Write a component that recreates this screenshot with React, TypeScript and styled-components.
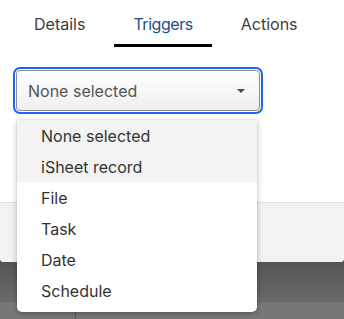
import React from "react";
import styled, { createGlobalStyle } from "styled-components";

const GlobalStyle = createGlobalStyle`
  html, body {
    margin: 0;
    padding: 0;
    background: #5a5a5a;
  }
  body {
    font-family: Inter, Roboto, "Open Sans", sans-serif;
  }
`;

const Backdrop = styled.div`
  width: 344px;
  height: 319px;
  overflow: hidden;
  display: flex;
  flex-direction: column;
  background: linear-gradient(#464646 0px, #555 262px, #6a6a6a 302px, #787878 303px);
  position: relative;
`;

const Panel = styled.div`
  background: #fff;
  height: 262px;
  display: flex;
  flex-direction: column;
  border-radius: 0 0 4px 4px;
  flex-shrink: 0;
`;

const TabBar = styled.div`
  display: flex;
  gap: 10px;
  padding-left: 15px;
  height: 48px;
`;

const Tab = styled.div<{ $active?: boolean }>`
  padding: 3px 19px 0;
  display: flex;
  align-items: center;
  font-size: 16px;
  letter-spacing: ${(p) => (p.$active ? "-0.45px" : "0")};
  color: ${(p) => (p.$active ? "#1b4f8c" : "#3d3d3d")};
  border-bottom: 3px solid ${(p) => (p.$active ? "#000" : "transparent")};
  box-sizing: border-box;
  height: 47px;
`;

const Body = styled.div`
  flex: 1;
  padding: 22px 0 0 16px;
  position: relative;
`;

const SelectBox = styled.div`
  width: 244px;
  height: 41px;
  box-sizing: border-box;
  border: 1px solid #8c8c8c;
  border-radius: 4px;
  background: linear-gradient(#ffffff, #efefef);
  outline: 2px solid #1a66f2;
  outline-offset: 1px;
  display: flex;
  align-items: center;
  justify-content: space-between;
  padding: 0 14px 0 11px;
  font-size: 16px;
  color: #545454;
`;

const Caret = styled.span`
  width: 0;
  height: 0;
  border-left: 4px solid transparent;
  border-right: 4px solid transparent;
  border-top: 4px solid #4a4a4a;
`;

const Footer = styled.div`
  height: 59px;
  background: #f2f2f2;
  border-top: 1px solid #e2e2e2;
  border-radius: 0 0 4px 4px;
`;

const Lower = styled.div`
  flex: 1;
  display: flex;
  flex-direction: column;
  justify-content: flex-end;
`;

const PageStrip = styled.div`
  height: 16px;
  display: grid;
  grid-template-columns: 76px 1fr;
  & > div:first-child {
    border-right: 1px solid #5e5e5e;
  }
`;

const Menu = styled.div`
  position: absolute;
  left: 17px;
  top: 120px;
  width: 240px;
  background: #fff;
  border-radius: 0 0 5px 5px;
  box-shadow: 0 2px 6px rgba(0, 0, 0, 0.25), 0 0 1px rgba(0, 0, 0, 0.3);
  padding-bottom: 6px;
  z-index: 2;
`;

const Item = styled.div<{ $shaded?: boolean }>`
  height: 31px;
  display: flex;
  align-items: center;
  padding-left: 24px;
  font-size: 16px;
  color: #333;
  background: ${(p) => (p.$shaded ? "#f3f3f3" : "#fff")};
`;

const items = ["None selected", "iSheet record", "File", "Task", "Date", "Schedule"];

export default function App() {
  return (
    <>
      <GlobalStyle />
      <Backdrop>
        <Panel>
          <TabBar>
            <Tab>Details</Tab>
            <Tab $active>Triggers</Tab>
            <Tab>Actions</Tab>
          </TabBar>
          <Body>
            <SelectBox>
              <span>None selected</span>
              <Caret />
            </SelectBox>
          </Body>
          <Footer />
        </Panel>
        <Lower>
          <PageStrip>
            <div />
            <div />
          </PageStrip>
        </Lower>
        <Menu>
          {items.map((label, i) => (
            <Item key={label} $shaded={i < 2}>
              {label}
            </Item>
          ))}
        </Menu>
      </Backdrop>
    </>
  );
}
